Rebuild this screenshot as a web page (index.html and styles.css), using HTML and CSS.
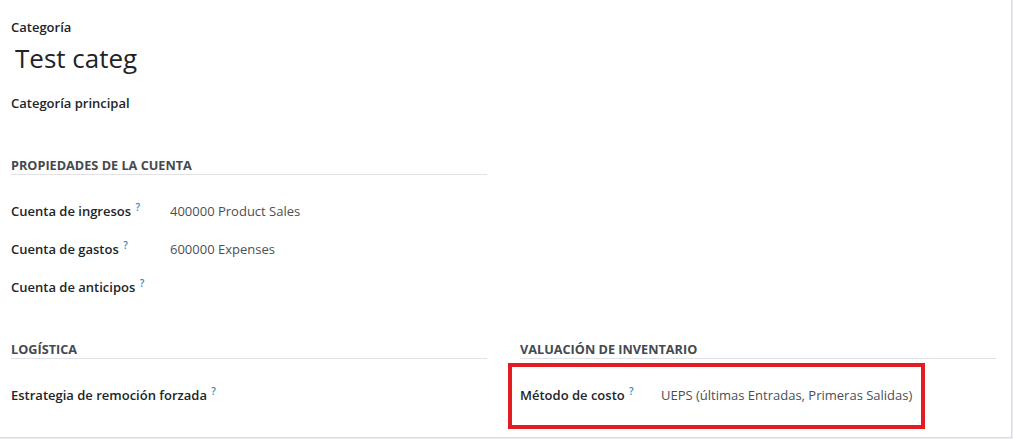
FILE: index.html
```html
<!DOCTYPE html>
<html lang="es">
<head>
<meta charset="utf-8">
<title>Categoría de producto</title>
<link rel="stylesheet" href="styles.css">
</head>
<body>
<div class="sheet">
  <div class="title-block">
    <div class="field-label">Categoría</div>
    <div class="record-name">Test categ</div>
    <div class="field-label parent">Categoría principal</div>
  </div>
  <div class="groups">
    <section class="group">
      <h3 class="group-title">Propiedades de la cuenta</h3>
      <div class="rows rows-accounts">
        <div class="row">
          <div class="row-label">Cuenta de ingresos <sup class="help">?</sup></div>
          <div class="row-value">400000 Product Sales</div>
        </div>
        <div class="row">
          <div class="row-label">Cuenta de gastos <sup class="help">?</sup></div>
          <div class="row-value">600000 Expenses</div>
        </div>
        <div class="row">
          <div class="row-label">Cuenta de anticipos <sup class="help">?</sup></div>
          <div class="row-value"></div>
        </div>
      </div>
    </section>
    <section class="group"></section>
    <section class="group">
      <h3 class="group-title">Logística</h3>
      <div class="rows rows-accounts">
        <div class="row">
          <div class="row-label nowrap">Estrategia de remoción forzada <sup class="help">?</sup></div>
          <div class="row-value"></div>
        </div>
      </div>
    </section>
    <section class="group">
      <h3 class="group-title">Valuación de inventario</h3>
      <div class="rows rows-valuation">
        <div class="row highlighted">
          <div class="row-label">Método de costo <sup class="help">?</sup></div>
          <div class="row-value">UEPS (últimas Entradas, Primeras Salidas)</div>
          <div class="highlight-box"></div>
        </div>
      </div>
    </section>
  </div>
</div>
</body>
</html>
```
FILE: styles.css
```css
* { box-sizing: border-box; }

html, body {
  margin: 0;
  padding: 0;
}

body {
  background: #ececf0;
  font-family: "Open Sans", "Noto Sans", "Liberation Sans", sans-serif;
  font-size: 13px;
  color: #212529;
  width: 1013px;
  height: 439px;
  overflow: hidden;
}

.sheet {
  width: 1012px;
  height: 438px;
  background: #ffffff;
  border-right: 1px solid #dcdce2;
  border-bottom: 1px solid #dcdce2;
  padding: 17px 15px 0 11px;
}

.title-block {
  display: flex;
  flex-direction: column;
}

.field-label {
  font-weight: 600;
  line-height: 20px;
}

.field-label.parent {
  margin-top: 18px;
}

.record-name {
  font-size: 26px;
  line-height: 34px;
  margin-top: 4px;
  padding-left: 4px;
  color: #1f2327;
}

.groups {
  display: grid;
  grid-template-columns: 476px 476px;
  column-gap: 33px;
  margin-top: 43px;
}

.group {
  margin-bottom: 43px;
}

.group-title {
  margin: 0;
  font-size: 12.7px;
  font-weight: 700;
  line-height: 18px;
  text-transform: uppercase;
  color: #444a50;
  border-bottom: 1px solid #e2e2e6;
}

.rows {
  display: flex;
  flex-direction: column;
  gap: 18px;
  margin-top: 26px;
}

.row {
  display: grid;
  line-height: 20px;
  position: relative;
}

.rows-accounts .row {
  grid-template-columns: 159px 1fr;
}

.rows-valuation .row {
  grid-template-columns: 141px 1fr;
}

.row-label {
  font-weight: 600;
  color: #212529;
  white-space: nowrap;
}

.row-value {
  color: #4a4f56;
}

.help {
  color: #2a8cbd;
  font-size: 10px;
  font-weight: 600;
  vertical-align: top;
  position: relative;
  top: -4px;
  margin-left: 1px;
}

.highlight-box {
  position: absolute;
  left: -12px;
  top: -22px;
  width: 417px;
  height: 66px;
  border: 4px solid #e31b23;
  pointer-events: none;
}
```
